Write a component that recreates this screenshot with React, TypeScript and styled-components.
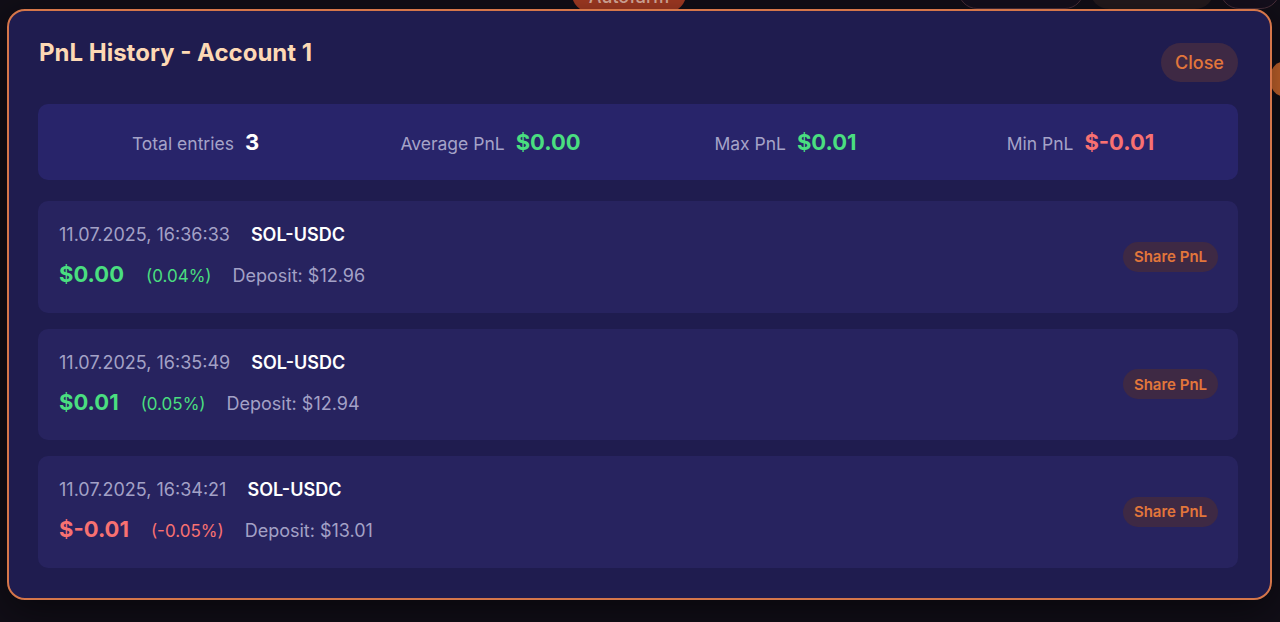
import React from "react";
import styled, { createGlobalStyle } from "styled-components";

const Global = createGlobalStyle`
  html, body { margin: 0; padding: 0; background: #110e17; }
  body { font-family: Inter, "Noto Sans", sans-serif; -webkit-font-smoothing: antialiased; }
  #root { width: 1280px; height: 622px; overflow: hidden; position: relative; }
`;

const Page = styled.div`
  width: 1280px;
  height: 622px;
  background: #110e17;
  position: relative;
  overflow: hidden;
`;

const BgHeader = styled.div`
  display: flex;
  align-items: flex-start;
  height: 36px;
  margin-top: -24px;
  padding: 0 0 0 572px;
`;

const BgAutofarm = styled.div`
  width: 114px;
  height: 36px;
  box-sizing: border-box;
  border-radius: 18px;
  background: #a33a23;
  color: #dcae9f;
  font-size: 18px;
  line-height: 20px;
  font-weight: 500;
  display: flex;
  align-items: flex-end;
  justify-content: center;
  padding-bottom: 5px;
`;

const BgRight = styled.div`
  margin-left: 272px;
  margin-top: -5px;
  display: flex;
  gap: 6px;
`;

const BgPill = styled.div<{ $w: number; $variant: "outline" | "dark" }>`
  width: ${(p) => p.$w}px;
  height: 38px;
  border-radius: 19px;
  box-sizing: border-box;
  border: 1px solid ${(p) => (p.$variant === "outline" ? "#4a2f3a" : "transparent")};
  background: ${(p) => (p.$variant === "outline" ? "#150f1d" : "#241a1d")};
`;

const BgDot = styled.div`
  position: absolute;
  right: -14px;
  top: 62px;
  width: 24px;
  height: 34px;
  border-radius: 50%;
  background: #c8652c;
`;

const Modal = styled.div`
  position: absolute;
  left: 7px;
  top: 9px;
  width: 1265px;
  height: 591px;
  box-sizing: border-box;
  border: 2px solid #d5764a;
  border-radius: 18px;
  background: #1f1c4f;
  padding: 32px 31px 30px 29px;
  display: flex;
  flex-direction: column;
  box-shadow: 0 10px 40px rgba(0, 0, 0, 0.5);
`;

const Header = styled.div`
  display: flex;
  justify-content: space-between;
  align-items: flex-start;
  margin-bottom: 22px;
`;

const Title = styled.h2`
  margin: -6px 0 0 1px;
  font-size: 24px;
  line-height: 32px;
  font-weight: 700;
  color: #fdd9b5;
  letter-spacing: 0;
`;

const CloseButton = styled.button`
  height: 39px;
  width: 77px;
  margin-right: 1px;
  border: none;
  border-radius: 20px;
  background: #3e2944;
  color: #e2763b;
  font-family: inherit;
  font-size: 18px;
  font-weight: 500;
  cursor: pointer;
  padding: 0;
`;

const Stats = styled.div`
  display: grid;
  grid-template-columns: repeat(4, 1fr);
  height: 76px;
  padding: 0 10px;
  margin-right: 1px;
  border-radius: 10px;
  background: #28246a;
  align-items: center;
  margin-bottom: 21px;
`;

const Stat = styled.div`
  display: flex;
  align-items: baseline;
  justify-content: center;
  gap: 11px;
`;

const StatLabel = styled.span`
  font-size: 17.5px;
  color: #a5a3c8;
`;

const StatValue = styled.span<{ $tone: "white" | "green" | "red" }>`
  font-size: 22px;
  font-weight: 700;
  color: ${(p) => (p.$tone === "green" ? "#4ade80" : p.$tone === "red" ? "#f87171" : "#ffffff")};
`;

const List = styled.div`
  display: flex;
  flex-direction: column;
  gap: 16px;
  margin-right: 1px;
`;

const Row = styled.div`
  height: 111.5px;
  box-sizing: border-box;
  border-radius: 10px;
  background: #27235f;
  padding: 0 20px 0 21px;
  display: flex;
  align-items: center;
  justify-content: space-between;
`;

const Info = styled.div`
  display: flex;
  flex-direction: column;
  gap: 14px;
  margin-top: -1px;
`;

const Line = styled.div<{ $h: number }>`
  display: flex;
  align-items: baseline;
  height: ${(p) => p.$h}px;
  line-height: ${(p) => p.$h}px;
`;

const DateText = styled.span`
  font-size: 18px;
  color: #a3a1c6;
  margin-right: 21px;
`;

const Pair = styled.span`
  font-size: 18px;
  font-weight: 600;
  color: #ffffff;
`;

const Pnl = styled.span<{ $neg: boolean }>`
  font-size: 22px;
  font-weight: 700;
  color: ${(p) => (p.$neg ? "#f87171" : "#4ade80")};
  margin-right: 22px;
`;

const Pct = styled.span<{ $neg: boolean }>`
  font-size: 17px;
  color: ${(p) => (p.$neg ? "#f87171" : "#4ade80")};
  margin-right: 21px;
`;

const Deposit = styled.span`
  font-size: 18px;
  color: #a3a1c6;
`;

const ShareButton = styled.button`
  height: 30px;
  width: 95px;
  border: none;
  border-radius: 15px;
  background: #3e2944;
  color: #e2763b;
  font-family: inherit;
  font-size: 15px;
  font-weight: 600;
  padding: 0;
  cursor: pointer;
`;

type Entry = { date: string; pair: string; pnl: string; pct: string; deposit: string; neg: boolean };

const entries: Entry[] = [
  { date: "11.07.2025, 16:36:33", pair: "SOL-USDC", pnl: "$0.00", pct: "(0.04%)", deposit: "Deposit: $12.96", neg: false },
  { date: "11.07.2025, 16:35:49", pair: "SOL-USDC", pnl: "$0.01", pct: "(0.05%)", deposit: "Deposit: $12.94", neg: false },
  { date: "11.07.2025, 16:34:21", pair: "SOL-USDC", pnl: "$-0.01", pct: "(-0.05%)", deposit: "Deposit: $13.01", neg: true },
];

export default function App() {
  return (
    <Page>
      <Global />
      <BgHeader>
        <BgAutofarm>Autofarm</BgAutofarm>
        <BgRight>
          <BgPill $w={126} $variant="outline" />
          <BgPill $w={124} $variant="dark" />
          <BgPill $w={60} $variant="outline" />
        </BgRight>
      </BgHeader>
      <BgDot />
      <Modal>
        <Header>
          <Title>PnL History - Account 1</Title>
          <CloseButton>Close</CloseButton>
        </Header>
        <Stats>
          <Stat>
            <StatLabel>Total entries</StatLabel>
            <StatValue $tone="white">3</StatValue>
          </Stat>
          <Stat>
            <StatLabel>Average PnL</StatLabel>
            <StatValue $tone="green">$0.00</StatValue>
          </Stat>
          <Stat>
            <StatLabel>Max PnL</StatLabel>
            <StatValue $tone="green">$0.01</StatValue>
          </Stat>
          <Stat>
            <StatLabel>Min PnL</StatLabel>
            <StatValue $tone="red">$-0.01</StatValue>
          </Stat>
        </Stats>
        <List>
          {entries.map((e) => (
            <Row key={e.date}>
              <Info>
                <Line $h={22}>
                  <DateText>{e.date}</DateText>
                  <Pair>{e.pair}</Pair>
                </Line>
                <Line $h={28}>
                  <Pnl $neg={e.neg}>{e.pnl}</Pnl>
                  <Pct $neg={e.neg}>{e.pct}</Pct>
                  <Deposit>{e.deposit}</Deposit>
                </Line>
              </Info>
              <ShareButton>Share PnL</ShareButton>
            </Row>
          ))}
        </List>
      </Modal>
    </Page>
  );
}
